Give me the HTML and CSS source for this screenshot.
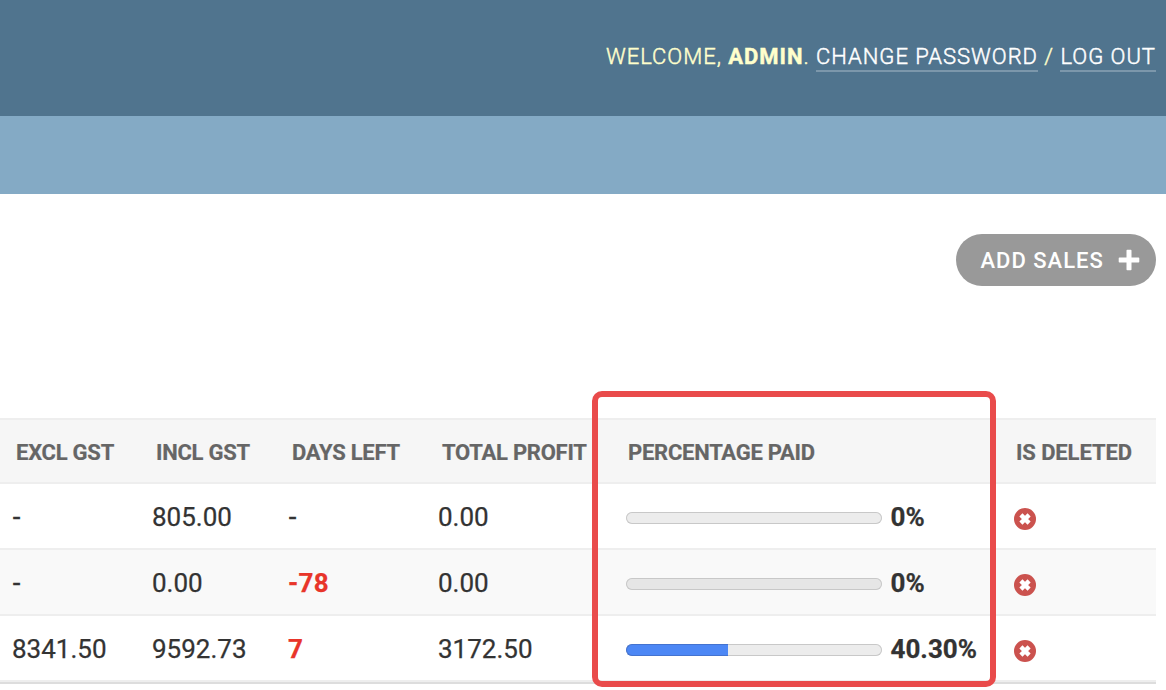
FILE: index.html
```html
<!DOCTYPE html>
<html lang="en">
<head>
<meta charset="utf-8">
<title>Sales</title>
<link rel="stylesheet" href="styles.css">
</head>
<body>
<svg class="defs" width="0" height="0" aria-hidden="true">
  <symbol id="icon-no" viewBox="0 0 22 22">
    <circle cx="11" cy="11" r="11" fill="#cb524e"/>
    <path d="M6.9 6.9 15.1 15.1M15.1 6.9 6.9 15.1" stroke="#fff" stroke-width="4.4" fill="none"/>
  </symbol>
</svg>
<header class="header">
  <div class="user-tools">Welcome, <strong>admin</strong>. <a href="#">Change password</a> / <a href="#">Log out</a></div>
</header>
<nav class="breadcrumbs"></nav>
<main class="content">
  <div class="object-tools">
    <a class="addlink" href="#"><span>Add sales</span>
      <svg class="plus" viewBox="0 0 22 22"><path d="M9.3 .7H12.7Q13.5 .7 13.5 1.5V8.5H20.5Q21.3 8.5 21.3 9.3V12.7Q21.3 13.5 20.5 13.5H13.5V20.5Q13.5 21.3 12.7 21.3H9.3Q8.5 21.3 8.5 20.5V13.5H1.5Q.7 13.5 .7 12.7V9.3Q.7 8.5 1.5 8.5H8.5V1.5Q8.5 .7 9.3 .7Z" fill="#fff"/></svg>
    </a>
  </div>
  <div class="results">
    <table class="result-list">
      <colgroup><col class="c-excl"><col class="c-incl"><col class="c-days"><col class="c-profit"><col class="c-paid"><col class="c-deleted"></colgroup>
      <thead>
        <tr><th>Excl GST</th><th>Incl GST</th><th>Days left</th><th>Total profit</th><th>Percentage paid</th><th class="wide">Is deleted</th></tr>
      </thead>
      <tbody>
        <tr>
          <td><span class="dash">-</span></td><td>805.00</td><td><span class="dash">-</span></td><td>0.00</td>
          <td><div class="paid"><span class="bar"></span><b>0%</b></div></td>
          <td><svg class="no"><use href="#icon-no"/></svg></td>
        </tr>
        <tr class="alt">
          <td><span class="dash">-</span></td><td>0.00</td><td><b class="due">-78</b></td><td>0.00</td>
          <td><div class="paid"><span class="bar"></span><b>0%</b></div></td>
          <td><svg class="no"><use href="#icon-no"/></svg></td>
        </tr>
        <tr>
          <td>8341.50</td><td>9592.73</td><td><b class="due">7</b></td><td>3172.50</td>
          <td><div class="paid"><span class="bar"><span class="fill" style="width:40%"></span></span><b>40.30%</b></div></td>
          <td><svg class="no"><use href="#icon-no"/></svg></td>
        </tr>
      </tbody>
    </table>
    <div class="highlight"></div>
  </div>
</main>
</body>
</html>
```
FILE: styles.css
```css
* { box-sizing: border-box; }
body { margin: 0; height: 690px; overflow: hidden; background: #fff; color: #333; font-family: Roboto, "Liberation Sans", sans-serif; }
.defs { display: block; height: 0; }
.header { height: 116px; padding: 43px 10px 0 0; background: #50748e; color: #ffc; }
.user-tools { text-align: right; text-transform: uppercase; font-size: 22px; line-height: 28px; font-weight: 300; letter-spacing: 0.98px; white-space: nowrap; -webkit-text-stroke: 0.45px; }
.user-tools strong { font-weight: 700; }
.user-tools a { display: inline-block; height: 29px; color: #fff; text-decoration: none; border-bottom: 2px solid #7c97ab; }
.breadcrumbs { height: 78px; background: #84aac5; }
.content { padding: 40px 10px 0 0; }
.object-tools { display: flex; justify-content: flex-end; }
.addlink { display: flex; align-items: center; justify-content: space-between; width: 200px; height: 52px; padding: 0 16px 0 24.5px; border-radius: 26px; background: #999; color: #fff; font-size: 22px; font-weight: 500; letter-spacing: 1px; text-transform: uppercase; text-decoration: none; white-space: nowrap; }
.plus { width: 22px; height: 22px; }
.results { position: relative; margin-top: 132px; }
.result-list { width: 1156px; table-layout: fixed; border-spacing: 0; border-bottom: 2px solid #ddd; }
.c-excl { width: 140px; }
.c-incl { width: 136px; }
.c-days { width: 150px; }
.c-profit { width: 186px; }
.c-paid { width: 388px; }
.c-deleted { width: 156px; }
.result-list th { height: 66px; padding: 2px 0 0 16px; border-top: 2px solid #eee; border-bottom: 2px solid #eee; background: #f6f6f6; color: #666; text-align: left; text-transform: uppercase; font-size: 22px; font-weight: 700; letter-spacing: -0.25px; white-space: nowrap; -webkit-text-stroke: 0.2px; }
.result-list th.wide { letter-spacing: -0.1px; }
.result-list td { height: 66px; padding: 2px 0 0 12px; border-bottom: 2px solid #eee; font-size: 26px; vertical-align: middle; white-space: nowrap; -webkit-text-stroke: 0.25px; }
.alt td { background: #f9f9f9; }
.dash { padding-left: 1px; -webkit-text-stroke: 0.7px; }
.due { color: #e8352a; letter-spacing: 0.3px; }
.paid { display: flex; align-items: center; gap: 8.5px; padding-left: 2px; }
.bar { display: flex; width: 256px; height: 12px; margin-top: 1px; border-radius: 6px; box-shadow: inset 0 0 0 1px #c8c8c8; background: #ececec; }
.alt .bar { background: #e6e6e6; }
.fill { height: 12px; background: #4c87f5; border: solid #4473cf; border-width: 1px 0 1px 1px; border-radius: 6px 0 0 6px; }
.no { display: block; width: 22px; height: 22px; margin: 4px 0 0 2px; }
.highlight { position: absolute; left: 591.5px; top: -27px; width: 404px; height: 296px; border: 6px solid #e94b4b; border-radius: 10px; }
```
